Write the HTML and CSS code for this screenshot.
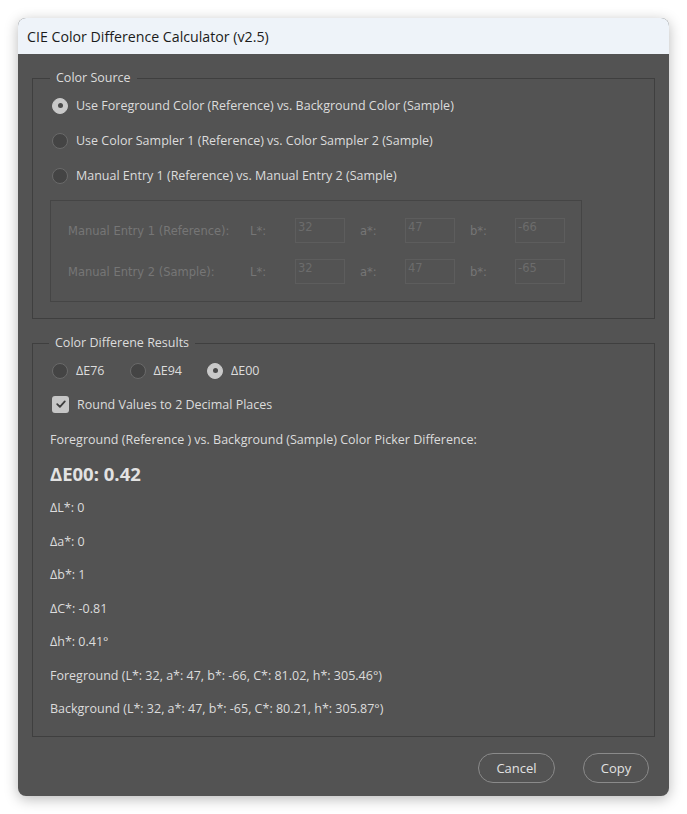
FILE: index.html
```html
<!DOCTYPE html>
<html lang="en">
<head>
  <meta charset="UTF-8">
  <title>CIE Color Difference Calculator (v2.5)</title>
  <link rel="stylesheet" href="styles.css">
</head>
<body>
  <div class="dialog">
    <div class="titlebar">CIE Color Difference Calculator (v2.5)</div>

    <div class="content">
      <!-- Where the two colours come from -->
      <fieldset class="group source">
        <legend>Color Source</legend>
        <label class="option"><span class="radio checked"></span>Use Foreground Color (Reference) vs. Background Color (Sample)</label>
        <label class="option"><span class="radio"></span>Use Color Sampler 1 (Reference) vs. Color Sampler 2 (Sample)</label>
        <label class="option"><span class="radio"></span>Manual Entry 1 (Reference) vs. Manual Entry 2 (Sample)</label>

        <div class="manual">
          <div class="manual-row">
            <span class="manual-label">Manual Entry 1 (Reference):</span>
            <span class="axis">L*:</span><span class="field">32</span>
            <span class="axis">a*:</span><span class="field">47</span>
            <span class="axis">b*:</span><span class="field">-66</span>
          </div>
          <div class="manual-row">
            <span class="manual-label">Manual Entry 2 (Sample):</span>
            <span class="axis">L*:</span><span class="field">32</span>
            <span class="axis">a*:</span><span class="field">47</span>
            <span class="axis">b*:</span><span class="field">-65</span>
          </div>
        </div>
      </fieldset>

      <!-- Results -->
      <fieldset class="group results">
        <legend>Color Differene Results</legend>
        <div class="formulas">
          <label class="option"><span class="radio"></span>ΔE76</label>
          <label class="option"><span class="radio"></span>ΔE94</label>
          <label class="option"><span class="radio checked"></span>ΔE00</label>
        </div>
        <label class="option check-row">
          <span class="checkbox">
            <svg width="12" height="12" viewBox="0 0 12 12"><path d="M2.2 6.2 L4.9 8.8 L9.8 3.4" fill="none" stroke="#3c3c3c" stroke-width="1.8" stroke-linecap="round" stroke-linejoin="round"/></svg>
          </span>Round Values to 2 Decimal Places
        </label>
        <p class="line">Foreground (Reference ) vs. Background (Sample) Color Picker Difference:</p>
        <p class="line total">ΔE00: 0.42</p>
        <p class="line">ΔL*: 0</p>
        <p class="line">Δa*: 0</p>
        <p class="line">Δb*: 1</p>
        <p class="line">ΔC*: -0.81</p>
        <p class="line">Δh*: 0.41°</p>
        <p class="line">Foreground (L*: 32, a*: 47, b*: -66, C*: 81.02, h*: 305.46°)</p>
        <p class="line">Background (L*: 32, a*: 47, b*: -65, C*: 80.21, h*: 305.87°)</p>
      </fieldset>

      <div class="actions">
        <button class="btn">Cancel</button>
        <button class="btn copy">Copy</button>
      </div>
    </div>
  </div>
</body>
</html>
```

FILE: styles.css
```css
/* Base */
* {
  margin: 0;
  padding: 0;
  box-sizing: border-box;
}

body {
  background: #ffffff;
  padding: 18px;
  font-family: 'Open Sans', 'Noto Sans', sans-serif;
  font-size: 12.5px;
  color: #dcdcdc;
}

.dialog {
  width: 651px;
  height: 778px;
  border-radius: 8px;
  overflow: hidden;
  background: #535353;
  box-shadow: 0 3px 14px rgba(0, 0, 0, 0.28);
  display: flex;
  flex-direction: column;
}

.titlebar {
  height: 36px;
  background: #eef3f9;
  color: #1b1b1b;
  font-size: 14.2px;
  padding-left: 9px;
  display: flex;
  align-items: center;
}

.content {
  padding: 16px 14px 0 14px;
  display: flex;
  flex-direction: column;
}

/* Group boxes */
.group {
  border: 1px solid #3f3f3f;
}

.group legend {
  padding: 0 6px;
  color: #dcdcdc;
  line-height: 16px;
}

.source {
  padding: 2px 72px 16px 17px;
  height: 249px;
}

.results {
  margin-top: 16px;
  padding: 5px 17px 0 17px;
  height: 402px;
}

.results legend {
  margin-left: -1px;
}

/* Radio and checkbox rows */
.option {
  display: flex;
  align-items: center;
  height: 35px;
  gap: 8px;
  margin-left: 2px;
}

.radio {
  width: 16px;
  height: 16px;
  border-radius: 50%;
  background: #444444;
  border: 1px solid #6a6a6a;
  flex-shrink: 0;
  display: flex;
  align-items: center;
  justify-content: center;
}

.radio.checked {
  background: #c9c9c9;
  border-color: #c9c9c9;
}

.radio.checked::after {
  content: "";
  width: 5px;
  height: 5px;
  border-radius: 50%;
  background: #4a4a4a;
}

.formulas {
  display: flex;
  height: 29px;
}

.formulas .option {
  height: 29px;
  width: 77.5px;
  margin-left: 0;
}

.formulas .option:first-child {
  margin-left: 2px;
}

.checkbox {
  width: 17px;
  height: 17px;
  border-radius: 3px;
  background: #c6c6c6;
  flex-shrink: 0;
  display: flex;
  align-items: center;
  justify-content: center;
}

.check-row {
  height: 38px;
}

/* Disabled manual entry block */
.manual {
  margin-top: 7px;
  border: 1px solid #454545;
  padding: 17px 16px 17px 17px;
  display: flex;
  flex-direction: column;
  gap: 16px;
  color: #767676;
  font-family: 'DejaVu Sans', sans-serif;
  font-size: 11.5px;
}

.manual-row {
  display: flex;
  align-items: center;
  height: 25px;
}

.manual-label {
  width: 182px;
}

.axis {
  width: 45px;
}

.field {
  width: 50px;
  height: 25px;
  margin-right: 15px;
  border: 1px solid #5d5d5d;
  padding: 1px 2px;
  color: #6c6c6c;
}

.field:last-child {
  margin-right: 0;
}

/* Result lines */
.line {
  line-height: 33.5px;
}

.total {
  font-size: 18.5px;
  font-weight: 700;
  line-height: 34.5px;
  color: #e2e2e2;
}

/* Footer buttons */
.actions {
  display: flex;
  justify-content: flex-end;
  gap: 28px;
  padding: 16px 6px 0 0;
}

.btn {
  height: 30px;
  width: 77px;
  border-radius: 15px;
  border: 1px solid #8a8a8a;
  background: transparent;
  color: #e2e2e2;
  font-family: inherit;
  font-size: 13px;
}

.btn.copy {
  width: 66px;
}
```
